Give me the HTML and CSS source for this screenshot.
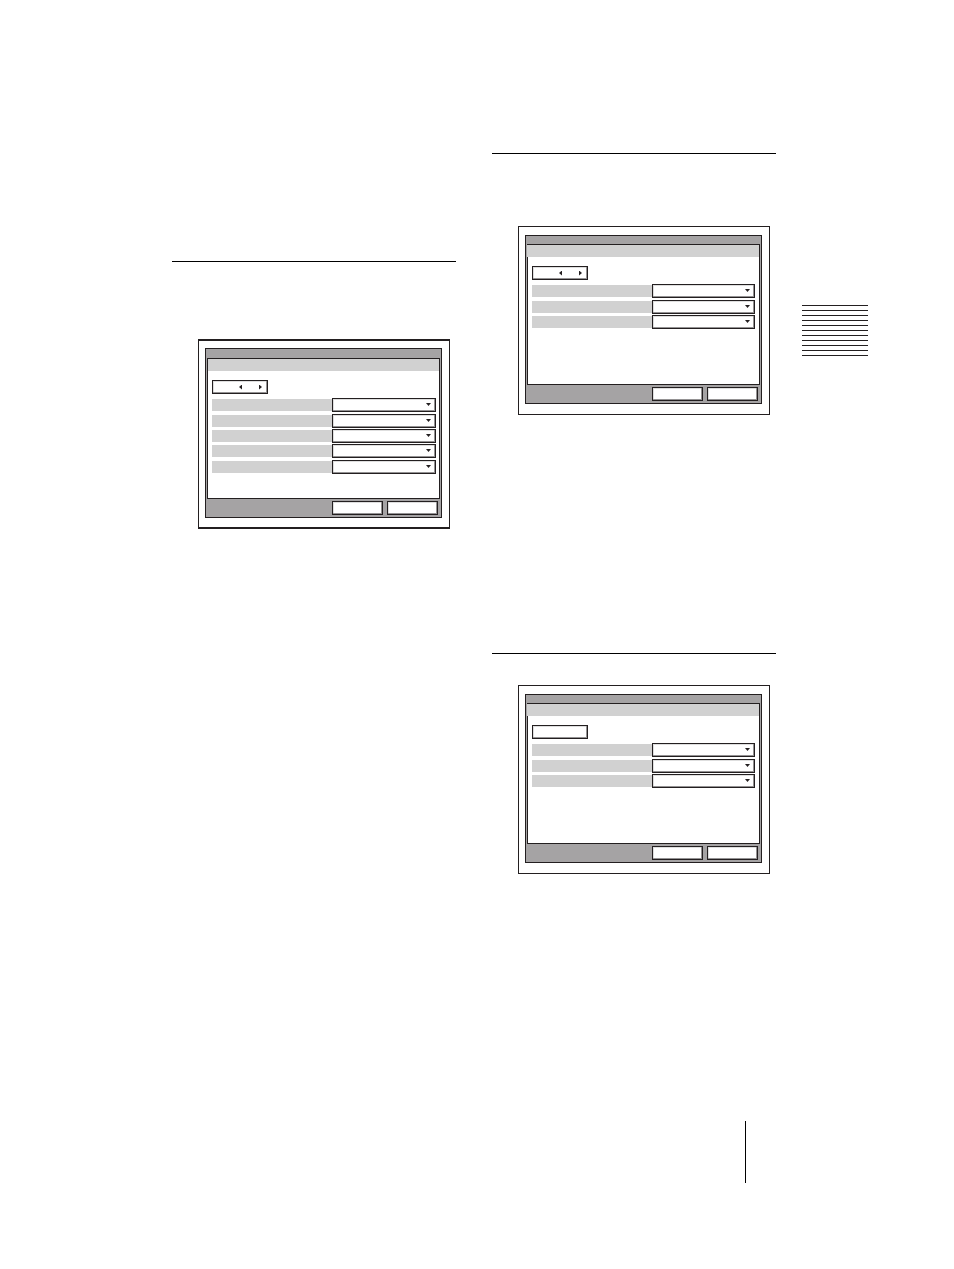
FILE: index.html
```
<!DOCTYPE html>
<html lang="en">
  <head>
    <meta charset="UTF-8" />
    <meta name="viewport" content="width=device-width, initial-scale=1.0" />
    <title>Menu</title>
    <link rel="stylesheet" href="styles.css">
  </head>
  <body>
    <div class="page">
      <!-- left column -->
      <div class="column left">
        <section>
          <hr class="rule">
          <div class="figure thick">
            <form class="window">
              <div class="panel">
                <div class="title"></div>
                <div class="pager box">
                  <button type="button" class="arrow prev" aria-label="Previous"></button>
                  <button type="button" class="arrow next" aria-label="Next"></button>
                </div>
                <ul class="rows">
                  <li><label for="a1"></label><div class="pick"><select id="a1" class="box"></select></div></li>
                  <li><label for="a2"></label><div class="pick"><select id="a2" class="box"></select></div></li>
                  <li><label for="a3"></label><div class="pick"><select id="a3" class="box"></select></div></li>
                  <li><label for="a4"></label><div class="pick"><select id="a4" class="box"></select></div></li>
                  <li><label for="a5"></label><div class="pick"><select id="a5" class="box"></select></div></li>
                </ul>
              </div>
              <div class="actions">
                <button type="button" class="btn box" aria-label="Execute"></button>
                <button type="button" class="btn box" aria-label="Cancel"></button>
              </div>
            </form>
          </div>
        </section>
      </div>

      <!-- right column -->
      <div class="column right">
        <section>
          <hr class="rule">
          <div class="figure">
            <form class="window">
              <div class="panel">
                <div class="title"></div>
                <div class="pager box">
                  <button type="button" class="arrow prev" aria-label="Previous"></button>
                  <button type="button" class="arrow next" aria-label="Next"></button>
                </div>
                <ul class="rows">
                  <li><label for="b1"></label><div class="pick"><select id="b1" class="box"></select></div></li>
                  <li><label for="b2"></label><div class="pick"><select id="b2" class="box"></select></div></li>
                  <li><label for="b3"></label><div class="pick"><select id="b3" class="box"></select></div></li>
                </ul>
              </div>
              <div class="actions">
                <button type="button" class="btn box" aria-label="Execute"></button>
                <button type="button" class="btn box" aria-label="Cancel"></button>
              </div>
            </form>
          </div>
        </section>
        <section class="short">
          <hr class="rule">
          <div class="figure">
            <form class="window">
              <div class="panel">
                <div class="title"></div>
                <div class="pager box"></div>
                <ul class="rows">
                  <li><label for="c1"></label><div class="pick"><select id="c1" class="box"></select></div></li>
                  <li><label for="c2"></label><div class="pick"><select id="c2" class="box"></select></div></li>
                  <li><label for="c3"></label><div class="pick"><select id="c3" class="box"></select></div></li>
                </ul>
              </div>
              <div class="actions">
                <button type="button" class="btn box" aria-label="Execute"></button>
                <button type="button" class="btn box" aria-label="Cancel"></button>
              </div>
            </form>
          </div>
        </section>
      </div>

      <!-- chapter mark -->
      <div class="mark"></div>
    </div>
    <footer class="footer"></footer>
  </body>
</html>
```

FILE: styles.css
```
* {
  margin: 0;
  padding: 0;
  box-sizing: border-box;
}
body {
  background-color: #fff;
  font-family: "Liberation Sans", sans-serif;
  font-size: 10px;
}
.page {
  display: flex;
  align-items: flex-start;
  padding: 0 86px 0 172px;
}
.column {
  flex: 1;
}
.left {
  padding-top: 261px;
  margin-right: 36px;
}
.right {
  padding-top: 153px;
  margin-right: 26px;
}
.rule {
  height: 1px;
  border: 0;
  background-color: #000;
  margin-bottom: 72px;
}
.left .rule {
  margin-bottom: 77px;
}
.short {
  margin-top: 238px;
}
.short .rule {
  margin-bottom: 31px;
}

/* screen drawings */
.figure {
  margin: 0 6px 0 26px;
  padding: 8px 7px 10px 6px;
  border: 1px solid #231f20;
}
.thick {
  padding: 7px 7px 9px 6px;
  border-width: 2px 1px;
}
.window {
  padding-top: 8px;
  border: 1px solid #231f20;
  background-color: #a5a3a4;
}
.thick .window {
  padding-top: 9px;
}
.panel {
  min-height: 141px;
  margin: 0 1px;
  padding: 0 4px;
  border: 1px solid #231f20;
  background-color: #fff;
}
.thick .panel {
  padding-right: 3px;
}
.title {
  height: 12px;
  margin: 0 -4px 9px -5px;
  background-color: #d1d1d1;
}
.thick .title {
  margin: 0 -3px 9px -4px;
}
/* white field with a bevel on the inside */
.box {
  border: 1px solid #231f20;
  border-radius: 0;
  background-color: #fff;
  box-shadow: inset -1px -1px #949293, inset 1px 1px #dedede;
}
.pager {
  display: flex;
  align-items: center;
  justify-content: flex-end;
  gap: 17px;
  width: 56px;
  height: 14px;
  margin-bottom: 4px;
  padding-right: 5px;
}
.arrow {
  width: 3px;
  height: 5px;
  border: 0;
  background-color: #231f20;
}
.prev {
  clip-path: polygon(100% 0, 100% 100%, 0 50%);
}
.next {
  clip-path: polygon(0 0, 100% 50%, 0 100%);
}
.rows {
  list-style: none;
}
.rows li {
  display: flex;
  align-items: center;
  height: 14px;
  margin-bottom: 1px;
}
.rows li:nth-child(3n+1) {
  margin-bottom: 2px;
}
.rows label {
  width: 120px;
  height: 12px;
  background-color: #d1d1d1;
}
.pick {
  position: relative;
  flex: 1;
  height: 14px;
}
.pick select {
  display: block;
  width: 100%;
  height: 14px;
  appearance: none;
}
.pick::after {
  content: "";
  position: absolute;
  right: 5px;
  top: 5px;
  width: 5px;
  height: 3px;
  background-color: #231f20;
  clip-path: polygon(0 0, 100% 0, 50% 100%);
  pointer-events: none;
}
.actions {
  display: flex;
  justify-content: flex-end;
  gap: 4px;
  padding: 2px 3px;
}
.btn {
  width: 51px;
  height: 14px;
}

/* 11 thin lines, 5px apart */
.mark {
  width: 66px;
  height: 51px;
  margin-top: 305px;
  background: repeating-linear-gradient(#231f20 0 1px, transparent 1px 5px);
}
.footer {
  height: 62px;
  margin: 247px 208px 86px 0;
  border-right: 1px solid #000;
}
```
